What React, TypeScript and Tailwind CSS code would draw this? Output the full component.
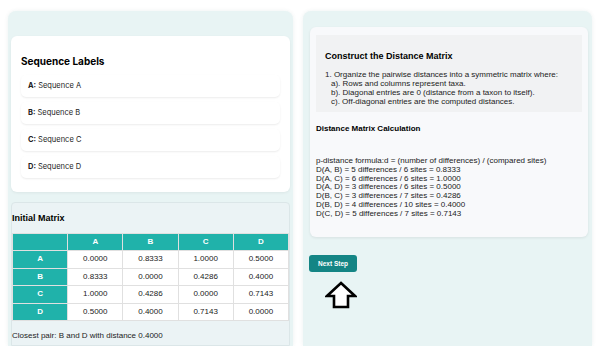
import React from "react";

const labels = ["A", "B", "C", "D"];
const matrix = [
  ["0.0000", "0.8333", "1.0000", "0.5000"],
  ["0.8333", "0.0000", "0.4286", "0.4000"],
  ["1.0000", "0.4286", "0.0000", "0.7143"],
  ["0.5000", "0.4000", "0.7143", "0.0000"],
];

const calcLines = [
  "p-distance formula:d = (number of differences) / (compared sites)",
  "D(A, B) = 5 differences / 6 sites = 0.8333",
  "D(A, C) = 6 differences / 6 sites = 1.0000",
  "D(A, D) = 3 differences / 6 sites = 0.5000",
  "D(B, C) = 3 differences / 7 sites = 0.4286",
  "D(B, D) = 4 differences / 10 sites = 0.4000",
  "D(C, D) = 5 differences / 7 sites = 0.7143",
];

export default function App() {
  return (
    <div className="w-[602px] h-[346px] overflow-hidden bg-white flex gap-[10px] pl-[8px] pr-[10px] pt-[11px] font-['Liberation_Sans',Arial,sans-serif] text-black">
      {/* Left panel */}
      <div className="w-[285px] shrink-0 bg-[#e8f4f4] rounded-t-[8px] px-[3px] pt-[25px] flex flex-col gap-[10px] shadow-[0_0_4px_rgba(0,80,80,0.08)]">
        <div className="bg-white rounded-[6px] px-[10px] pt-[18px] pb-[14px] shadow-[0_1px_3px_rgba(0,0,0,0.06)] font-['Inter',sans-serif]">
          <h2 className="text-[10px] font-bold leading-[14px] mb-[7px]">Sequence Labels</h2>
          <div className="flex flex-col gap-[5px]">
            {labels.map((l) => (
              <div
                key={l}
                className="h-[22px] flex items-center px-[7px] rounded-[5px] bg-white shadow-[0_1px_2px_rgba(0,0,0,0.08)] text-[7.5px] text-[#222]"
              >
                <span className="font-bold mr-[2px]">{l}:</span>
                <span>Sequence {l}</span>
              </div>
            ))}
          </div>
        </div>

        <div className="flex-1 border border-[#dbe6e8] rounded-t-[4px] bg-[#ebf3f5] px-0 pt-[9px]">
          <h3 className="text-[9px] font-bold leading-[12px] mb-[9px]">Initial Matrix</h3>
          <table className="w-[277px] border-collapse table-fixed text-[8px]">
            <thead>
              <tr className="h-[17px]">
                <th className="bg-[#20b2aa] border border-[#e0e0e0] text-white font-bold"></th>
                {labels.map((l) => (
                  <th key={l} className="bg-[#20b2aa] border border-[#e0e0e0] text-white font-bold">
                    {l}
                  </th>
                ))}
              </tr>
            </thead>
            <tbody>
              {matrix.map((row, i) => (
                <tr key={i} className="h-[17.5px]">
                  <td className="bg-[#20b2aa] border border-[#e0e0e0] text-white font-bold text-center">
                    {labels[i]}
                  </td>
                  {row.map((v, j) => (
                    <td key={j} className="bg-white border border-[#e0e0e0] text-center text-[#222]">
                      {v}
                    </td>
                  ))}
                </tr>
              ))}
            </tbody>
          </table>
          <p className="text-[8px] mt-[9px] text-[#222]">Closest pair: B and D with distance 0.4000</p>
        </div>
      </div>

      {/* Right panel */}
      <div className="w-[289px] shrink-0 bg-[#e8f4f4] rounded-t-[8px] pl-[7px] pr-[4px] pt-[16px] shadow-[0_0_4px_rgba(0,80,80,0.08)]">
        <div className="bg-[#f8f9fb] rounded-[6px] px-[6px] pt-[8px] pb-[16px] h-[210px] shadow-[0_1px_3px_rgba(0,0,0,0.08)]">
          <div className="bg-[#f1f2f3] px-[9px] pt-[16px] pb-[6px] h-[77px]">
            <h3 className="text-[9px] font-bold leading-[11px] mb-[8px]">Construct the Distance Matrix</h3>
            <div className="text-[8px] leading-[9px] text-[#222]">
              <div>1. Organize the pairwise distances into a symmetric matrix where:</div>
              <div className="pl-[6px]">a). Rows and columns represent taxa.</div>
              <div className="pl-[6px]">b). Diagonal entries are 0 (distance from a taxon to itself).</div>
              <div className="pl-[6px]">c). Off-diagonal entries are the computed distances.</div>
            </div>
          </div>
          <h4 className="text-[8px] font-bold mt-[12px] leading-[10px]">Distance Matrix Calculation</h4>
          <div className="mt-[23px] text-[8px] leading-[8.8px] text-[#222]">
            {calcLines.map((line) => (
              <div key={line}>{line}</div>
            ))}
          </div>
        </div>

        <button className="mt-[18px] ml-[-1px] w-[48px] h-[17px] rounded-[3px] bg-[#148585] text-white text-[6.5px] font-bold flex items-center justify-center">
          Next Step
        </button>
        <svg width="32" height="28" viewBox="0 0 32 28" className="ml-[15px] mt-[9px]">
          <polygon
            points="16,2 30,15 23,15 23,26 9,26 9,15 2,15"
            fill="white"
            stroke="black"
            strokeWidth="2.6"
            strokeLinejoin="miter"
          />
        </svg>
      </div>
    </div>
  );
}
